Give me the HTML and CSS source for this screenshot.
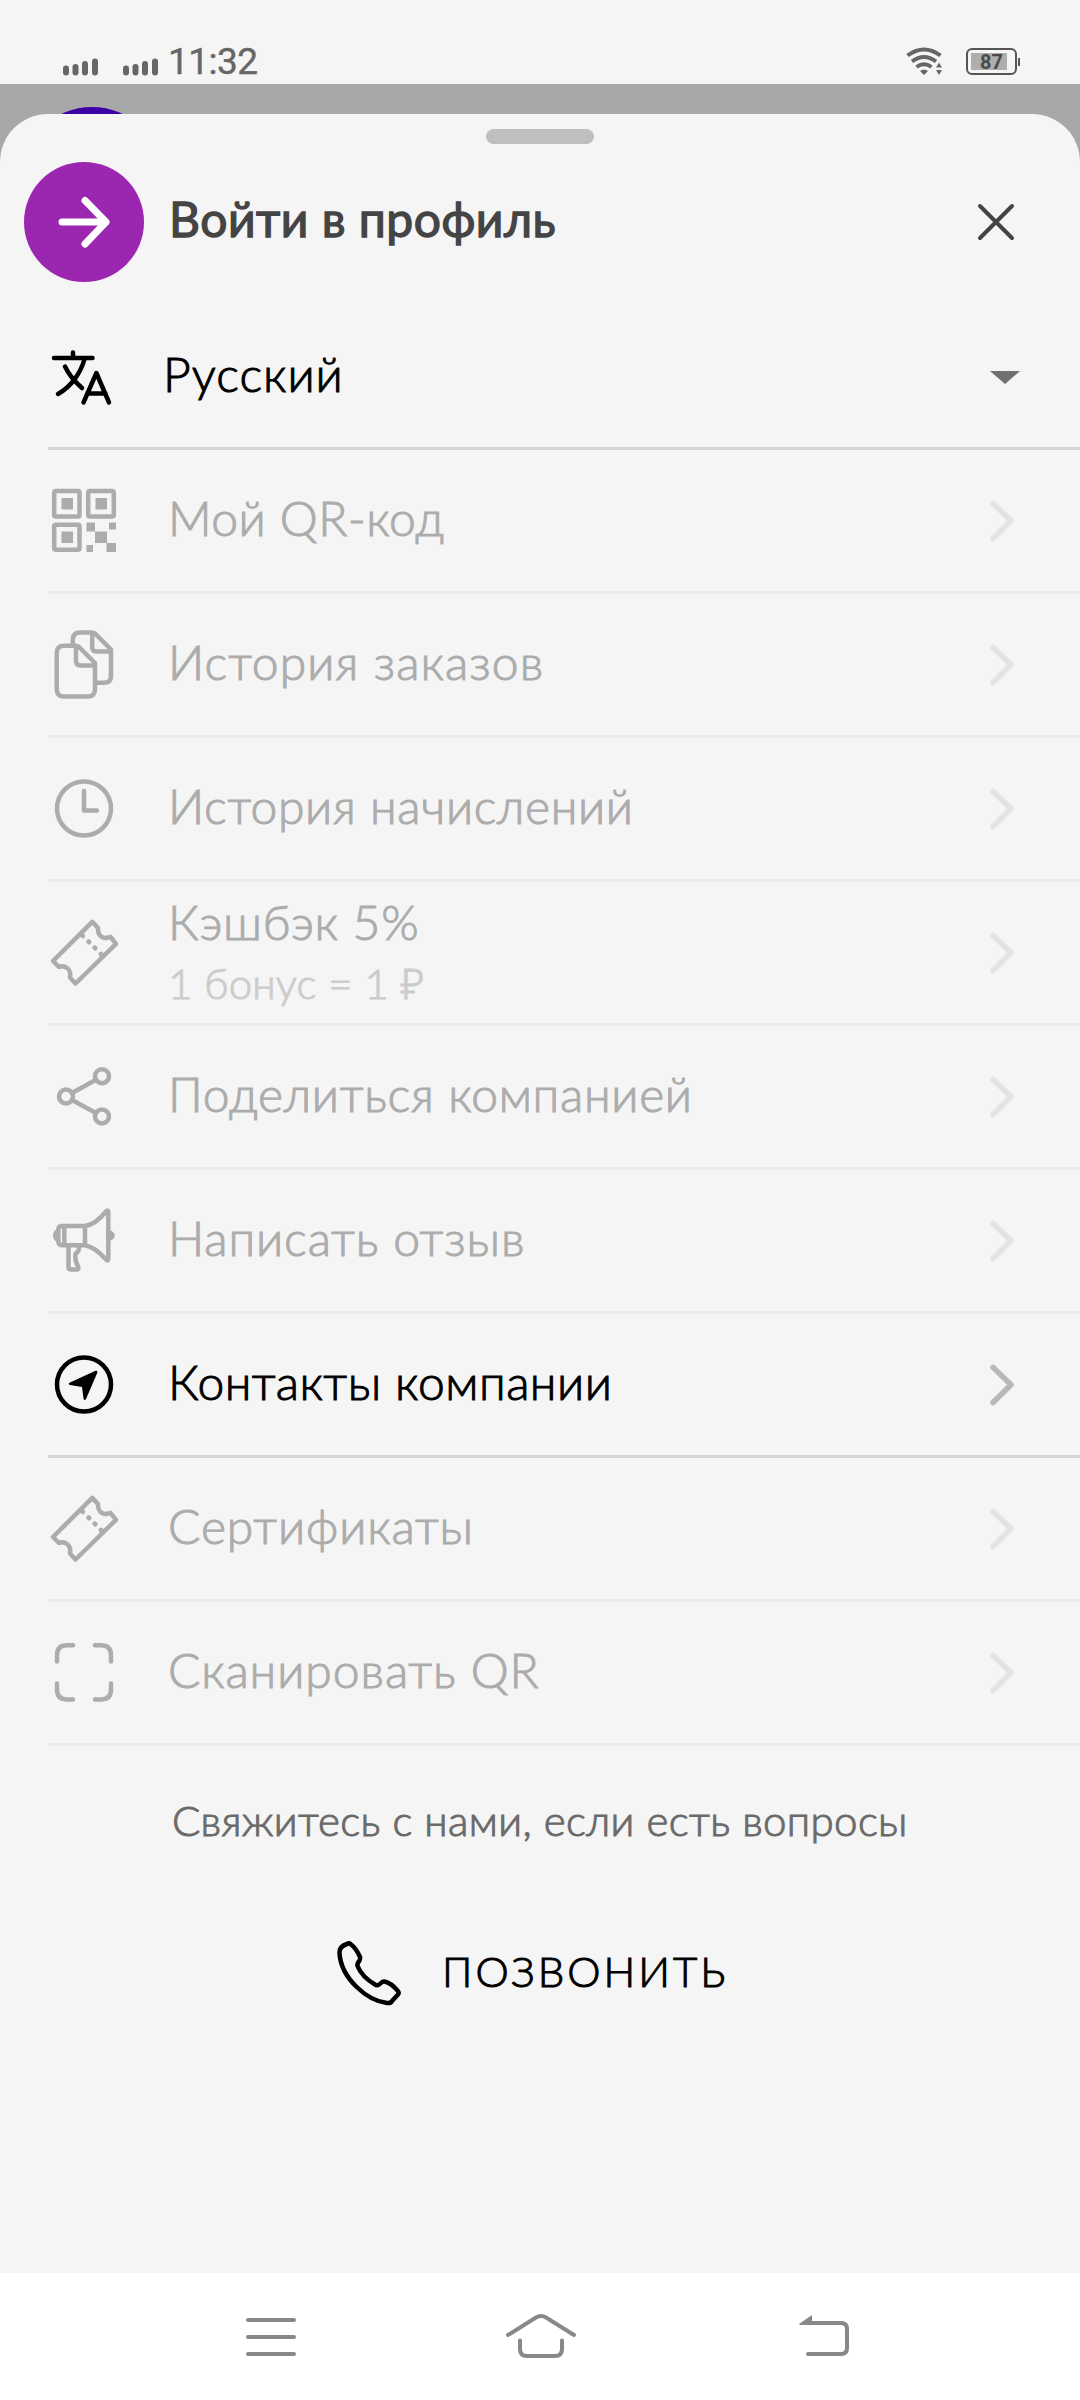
FILE: index.html
```html
<!DOCTYPE html>
<html lang="ru">
<head>
<meta charset="utf-8">
<title>Профиль</title>
<link rel="stylesheet" href="styles.css">
</head>
<body>
<svg class="sprite" aria-hidden="true">
  <symbol id="chevron" viewBox="0 0 30 48"><path d="M6 6.300 24 23.700 6 41.500"/></symbol>
  <symbol id="signal" viewBox="0 0 36 18"><path d="M3 10.500V14.500M12.500 9V14.500M22 6V14.500M32 3.500V14.500"/></symbol>
  <symbol id="ticket" viewBox="0 0 72 72">
    <path d="M44.300 5.800 50 12C49.500 18 53 22.500 58.500 22L62.500 20.800 68 27.800 27.500 67.500 22 61.500C23.500 54 18 48.500 11 51L5 45Z"/>
    <path d="M34.500 19.500 53 38" stroke-dasharray="0.500 8.200" stroke-width="4.800"/>
  </symbol>
</svg>
<div class="screen">
  <header class="status">
    <svg class="signal"><use href="#signal"/></svg>
    <svg class="signal signal-second"><use href="#signal"/></svg>
    <span class="time">11:32</span>
    <svg class="wifi" viewBox="0 0 38 30">
      <path d="M1.500 8.500Q18 -3.500 34.500 8.500M6 14.500Q18 5.500 30 14.500M10.500 20Q18 14.500 25.500 20" fill="none" stroke="#666" stroke-width="4"/>
      <path d="M14 24Q18 21 22 24L18 28Z" fill="#666"/>
      <path d="M30 20.500 33 15.500 36 20.500ZM30 23 36 23 33 28Z" fill="#666" stroke="#f5f5f5" stroke-width="1" paint-order="stroke"/>
    </svg>
    <div class="battery"><div class="charge">87</div></div>
  </header>
  <main class="backdrop">
    <div class="avatar"></div>
    <section class="sheet">
      <div class="handle"></div>
      <div class="head">
        <div class="login"><svg viewBox="0 0 120 120"><path d="M38 60H82M61 38.500 82 60 61 82"/></svg></div>
        <h1 class="title">Войти в профиль</h1>
        <svg class="close" viewBox="0 0 40 40"><path d="M4 4 36 36M36 4 4 36"/></svg>
      </div>
      <div class="row language active">
        <svg class="icon" viewBox="0 0 72 72"><path d="M6 18H44.500M25 12.500V18M36.500 19C33 32 24 46 10 54M17 26.500C21 35 26 41 34 48M35.500 62.500 48.400 33 61 62.500M39.500 53.500H57.500"/></svg>
        <span class="label ls-100">Русский</span>
        <svg class="caret" viewBox="0 0 30 13"><path d="M0 0H30L15 13Z"/></svg>
      </div>
      <div class="row">
        <svg class="icon" viewBox="0 0 72 72">
          <path d="M8 7H30Q31.500 7 31.500 9V31Q31.500 32.500 30 32.500H8Q6.200 32.500 6.200 31V9Q6.200 7 8 7ZM42 7H64Q65.800 7 65.800 9V31Q65.800 32.500 64 32.500H42Q40.200 32.500 40.200 31V9Q40.200 7 42 7ZM8 40.800H30Q31.500 40.800 31.500 42.500V64Q31.500 65.800 30 65.800H8Q6.200 65.800 6.200 64V42.500Q6.200 40.800 8 40.800Z"/>
          <path class="solid" d="M13.500 14H25V25.500H13.500ZM47.500 14H59V25.500H47.500ZM13.500 47.500H25V59H13.500ZM38.500 38.500H47V47.500H38.500ZM61 38.500H68V45.500H61ZM47 47.500H59V59H47ZM38.500 61H45V68H38.500ZM58.500 59H68V68H58.500Z"/>
        </svg>
        <span class="label ls-50">Мой QR-код</span>
        <svg class="chevron"><use href="#chevron"/></svg>
      </div>
      <div class="row">
        <svg class="icon" viewBox="0 0 72 72"><path d="M28 17.800H16Q8.700 17.800 8.700 25V61Q8.700 68.500 16 68.500H40Q47 68.500 47 61V35L31 19Q30 17.800 28 17.800ZM28 19V33Q28 37.500 32.500 37.500H46M24.800 17.500V12Q24.800 4.500 32 4.500H44Q46 4.500 47.500 6L63 21.500V48Q63 54.800 56 54.800H49.500M44.200 5V19Q44.200 23.500 48.500 23.500H62"/></svg>
        <span class="label ls-110">История заказов</span>
        <svg class="chevron"><use href="#chevron"/></svg>
      </div>
      <div class="row">
        <svg class="icon" viewBox="0 0 72 72"><circle cx="36" cy="36.500" r="27"/><path d="M36 19V38.500H49"/></svg>
        <span class="label ls-65">История начислений</span>
        <svg class="chevron"><use href="#chevron"/></svg>
      </div>
      <div class="row">
        <svg class="icon"><use href="#ticket"/></svg>
        <div class="stack">
          <span class="line ls-80">Кэшбэк 5%</span>
          <span class="sub">1 бонус = 1 ₽</span>
        </div>
        <svg class="chevron"><use href="#chevron"/></svg>
      </div>
      <div class="row">
        <svg class="icon" viewBox="0 0 72 72"><circle cx="18" cy="36.500" r="7"/><circle cx="54" cy="16.200" r="7"/><circle cx="54" cy="56.500" r="7"/><path d="M24 33 48 19.700M24 40 48 53"/></svg>
        <span class="label ls-70">Поделиться компанией</span>
        <svg class="chevron"><use href="#chevron"/></svg>
      </div>
      <div class="row">
        <svg class="icon" viewBox="0 0 72 72">
          <path d="M37 22H14Q10.300 22 10.300 26V37Q10.300 41.200 14 41.200H37ZM16.300 22V41.200M37 22Q47 21 58 7.500Q60.300 5 60.300 9V54Q60.300 58 58 55.500Q47 43 37 41.200M20.500 42V63Q20.500 65.500 23 65.500H28.500Q31 65.500 30.300 63Q26.500 56 27.500 49.500Q31.500 48 31 42"/>
          <path class="solid" d="M9 25V38Q5 36 5 31.500Q5 27 9 25ZM61.500 26Q66.800 28 66.800 31.500Q66.800 35 61.500 37Z"/>
        </svg>
        <span class="label ls-90">Написать отзыв</span>
        <svg class="chevron"><use href="#chevron"/></svg>
      </div>
      <div class="row active">
        <svg class="icon" viewBox="0 0 72 72"><circle cx="36" cy="36.500" r="27"/><path class="solid" d="M47.500 22.800Q50 22.200 49.300 24.800L38 51Q36.800 53 35.600 51L34 39 22 37Q19.800 36 21.500 34.800Z"/></svg>
        <span class="label ls-50">Контакты компании</span>
        <svg class="chevron"><use href="#chevron"/></svg>
      </div>
      <div class="row">
        <svg class="icon"><use href="#ticket"/></svg>
        <span class="label ls-90">Сертификаты</span>
        <svg class="chevron"><use href="#chevron"/></svg>
      </div>
      <div class="row">
        <svg class="icon" viewBox="0 0 72 72"><path d="M9 25.500V19.200Q9 9.200 19 9.200H25M47 9.200H53Q63 9.200 63 19.200V25.500M9 47.500V53.500Q9 63.500 19 63.500H25M47 63.500H53Q63 63.500 63 53.500V47.500"/></svg>
        <span class="label ls-95">Сканировать QR</span>
        <svg class="chevron"><use href="#chevron"/></svg>
      </div>
      <p class="hint">Свяжитесь с нами, если есть вопросы</p>
      <div class="call">
        <svg class="icon" viewBox="0 0 72 72"><path d="M17.500 7Q16 5.800 14 7Q6 9.500 6.500 16C8 42 35 64 54 66Q57.500 66.500 59 64L65 57.500Q66.500 55.500 64.500 53.500Q58 46 51.500 44.500Q50 44 48 46Q44.500 49.500 42 47.500Q29 40 24.500 29Q24 26.500 26.500 23.500Q27.500 22 27 20Q23 11 17.500 7Z"/></svg>
        <span class="call-text">ПОЗВОНИТЬ</span>
      </div>
    </section>
  </main>
  <nav class="nav">
    <svg viewBox="0 0 80 60"><path d="M17 17H63M17 34H63M17 51H63"/></svg>
    <svg class="home" viewBox="0 0 80 60"><path d="M7 32 35 14.500Q40 11.500 45 14.500L73 32M19 37.500V46Q19 53 26 53H54Q61 53 61 46V37.500"/></svg>
    <svg class="back" viewBox="0 0 80 60"><path d="M25 20H56Q62 20 62 26V45Q62 51 56 51H23"/><path d="M14 21 27 12V22H15Z" fill="#888" stroke="none"/></svg>
  </nav>
</div>
</body>
</html>
```
FILE: styles.css
```css
* { box-sizing: border-box; }
body {
  margin: 0;
  background: #f5f5f5;
  font-family: Lato, "Noto Sans", sans-serif;
  font-weight: 300;
}
svg { display: block; flex: none; }
.sprite { position: absolute; width: 0; height: 0; }
.screen { width: 1080px; height: 2400px; display: flex; flex-direction: column; overflow: hidden; }

.status {
  height: 84px;
  padding: 0 60px 0 63px;
  display: flex;
  align-items: flex-end;
  color: #666;
  font-family: Roboto, sans-serif;
  font-weight: 400;
}
.signal { width: 36px; height: 18px; margin-bottom: 8px; fill: none; stroke: #666; stroke-width: 6; stroke-linecap: round; }
.signal-second { margin-left: 24px; }
.time { margin-left: 9px; font-size: 37px; line-height: 44px; letter-spacing: -0.500px; height: 44px; flex: 1; -webkit-text-stroke: 0.400px currentColor; }
.wifi { width: 38px; height: 30px; margin: 0 22px 7px 0; }
.battery {
  position: relative;
  width: 51px;
  height: 27px;
  margin: 0 3px 9px 0;
  padding: 3px;
  border: 2px solid #555;
  border-radius: 6px;
}
.battery::after { content: ""; position: absolute; right: -5px; top: 8px; width: 2px; height: 8px; background: #555; }
.charge {
  width: 36px;
  height: 17px;
  background: #aeaeae;
  color: #4a4a4a;
  font-size: 20px;
  font-weight: 700;
  line-height: 18px;
  text-align: right;
  padding-right: 4px;
}

.backdrop { position: relative; flex: 1; padding-top: 30px; background: #a8a8a8; }
.avatar { position: absolute; left: 22px; top: 23px; width: 140px; height: 140px; border-radius: 50%; background: #3d00a5; }
.sheet { position: relative; height: 100%; background: #f5f5f5; border-radius: 48px 48px 0 0; padding-top: 15px; }
.handle { width: 108px; height: 15px; margin: 0 auto; border-radius: 8px; background: #bfbfbe; }
.head { display: flex; align-items: center; height: 120px; margin: 18px 64px 23px 24px; }
.login { width: 120px; height: 120px; border-radius: 50%; background: #9b26b0; }
.login svg { fill: none; stroke: #fff; stroke-width: 7; stroke-linecap: round; stroke-linejoin: round; }
.title {
  flex: 1;
  margin: 0;
  padding: 0 0 7px 25px;
  font-size: 48px;
  font-weight: 400;
  letter-spacing: 0.500px;
  color: #444;
  -webkit-text-stroke: 1.300px #444;
}
.close { width: 40px; height: 40px; fill: none; stroke: #444; stroke-width: 4; stroke-linecap: round; }

.row {
  height: 144px;
  margin-left: 48px;
  padding-right: 63px;
  display: flex;
  align-items: center;
  border-bottom: 3px solid #ececec;
  color: #acacac;
  font-size: 48px;
}
.row.active { color: #000; border-bottom-color: #d5d5d5; }
.language { height: 145px; padding-right: 60px; }
.icon { width: 72px; height: 72px; margin-bottom: 1px; fill: none; stroke: currentColor; stroke-width: 4.500; stroke-linecap: round; stroke-linejoin: round; }
.icon .solid { fill: currentColor; stroke: none; }
.label, .stack { flex: 1; margin-left: 48px; white-space: nowrap; }
.label, .line, .sub, .hint, .call-text { -webkit-text-stroke: 1px currentColor; }
.label { padding-bottom: 7px; }
.language .label { margin-left: 43px; padding-bottom: 5px; }
.stack { display: flex; flex-direction: column; }
.line { line-height: 60px; }
.sub { line-height: 62px; font-size: 42px; color: #ccc; letter-spacing: 0.200px; }
.chevron { width: 30px; height: 48px; fill: none; stroke: #e3e3e3; stroke-width: 5.500; stroke-linecap: round; stroke-linejoin: round; }
.active .chevron { stroke: #b8b8b8; }
.caret { width: 30px; height: 13px; margin-top: 2px; fill: #707070; }

.ls-50 { letter-spacing: 0.500px; }
.ls-65 { letter-spacing: 0.650px; }
.ls-70 { letter-spacing: 0.700px; }
.ls-80 { letter-spacing: 0.800px; }
.ls-90 { letter-spacing: 0.900px; }
.ls-95 { letter-spacing: 0.950px; }
.ls-100 { letter-spacing: 1px; }
.ls-110 { letter-spacing: 1.100px; }

.hint { margin: 44px 0 0 172px; font-size: 42px; line-height: 60px; letter-spacing: 0.380px; color: #6a6a6a; white-space: nowrap; }
.call { display: flex; align-items: center; margin: 87px 0 0 333px; color: #000; }
.call-text { margin-left: 37px; padding-bottom: 6px; font-size: 42px; letter-spacing: 3px; }

.nav { height: 127px; padding: 30px 0 0 231px; display: flex; background: #fff; }
.nav svg { width: 80px; height: 60px; fill: none; stroke: #888; stroke-width: 4; stroke-linecap: round; stroke-linejoin: round; }
.nav .home { margin-left: 190px; }
.nav .back { margin-left: 204px; }
```
